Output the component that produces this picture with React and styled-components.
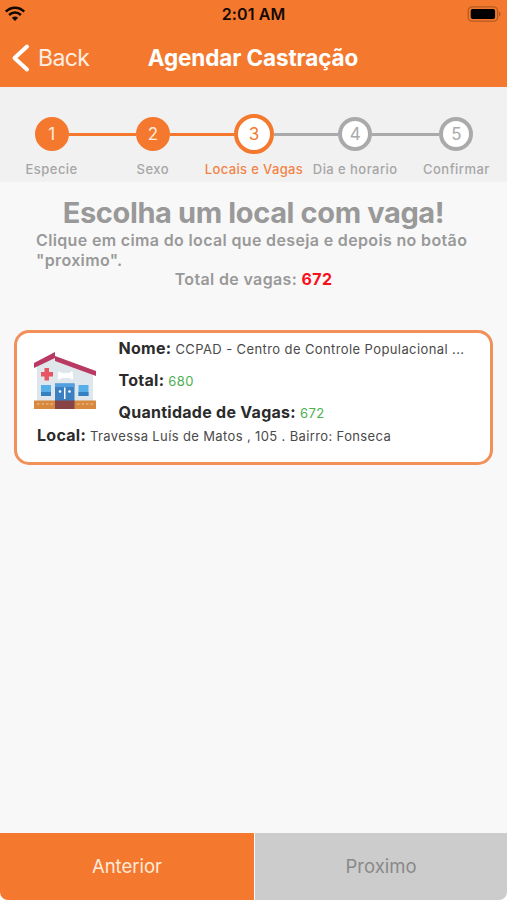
import React from 'react';
import styled, { createGlobalStyle } from 'styled-components';

const ORANGE = '#f4792f';

const GlobalStyle = createGlobalStyle`
  * {
    box-sizing: border-box;
  }
  body {
    margin: 0;
    background: #fff;
    font-family: Inter, 'Liberation Sans', sans-serif;
  }
`
const Screen = styled.div`
  display: flex;
  flex-direction: column;
  width: 507px;
  height: 900px;
  overflow: hidden;
  background: #f8f8f8;
  border-radius: 0 0 8px 8px;
`
const StatusBar = styled.div`
  display: grid;
  grid-template-columns: 1fr auto 1fr;
  align-items: center;
  height: 29px;
  padding: 0 6px 0 4px;
  background: ${ORANGE};
  svg {
    display: block;
    margin-top: -2px;
  }
  svg:last-child {
    justify-self: end;
  }
`
const Clock = styled.span`
  padding-left: 2px;
  font-size: 16px;
  font-weight: 600;
  line-height: 29px;
  letter-spacing: 0.1px;
  color: #150a03;
`
const NavBar = styled.div`
  display: grid;
  grid-template-columns: 1fr auto 1fr;
  align-items: center;
  height: 58px;
  padding: 0 11px 0 10px;
  background: ${ORANGE};
  color: #fff;
`
const BackButton = styled.div`
  display: flex;
  align-items: center;
  gap: 8px;
  font-size: 23px;
  line-height: 30px;
  color: #ffeee2;
  letter-spacing: -0.6px;
`
const NavTitle = styled.div`
  font-size: 22.5px;
  font-weight: 700;
  line-height: 30px;
  letter-spacing: -0.12px;
`
const Stepper = styled.div`
  display: flex;
  height: 95px;
  padding: 26px 0 0 1px;
  background: #f1f1f1;
`
const StepItem = styled.div`
  display: flex;
  flex: 1 1 0;
  min-width: 0;
  flex-direction: column;
  align-items: center;
`
const StepTrack = styled.div`
  display: flex;
  align-items: center;
  width: 100%;
  height: 42px;
`
const StepLine = styled.div`
  flex: 1;
  height: 3px;
  background: ${({ color }) => color || 'transparent'};
`
const StepCircle = styled.div`
  display: flex;
  align-items: center;
  justify-content: center;
  width: ${({ $status }) => $status === 'current' ? 40 : 34}px;
  height: ${({ $status }) => $status === 'current' ? 40 : 34}px;
  border: 4px solid ${({ $status }) => $status === 'pending' ? '#aaa' : ORANGE};
  border-radius: 50%;
  background: ${({ $status }) => $status === 'done' ? ORANGE : '#fff'};
  color: ${({ $status }) => ({ done: '#ffeadb', current: ORANGE, pending: '#aaa' })[$status]};
  font-size: 17px;
  line-height: 20px;
  padding-bottom: 1px;
`
const StepLabel = styled.div`
  margin-top: 5px;
  font-size: 13px;
  font-weight: 500;
  line-height: 18px;
  letter-spacing: ${({ $active }) => $active ? 0.35 : 0.45}px;
  white-space: nowrap;
  color: ${({ $active }) => $active ? '#f28447' : '#a6a6a6'};
`
const Intro = styled.div`
  display: flex;
  flex-direction: column;
  align-items: center;
  padding: 13px 36px 0;
  color: #999;
`
const Heading = styled.h1`
  margin: 0;
  font-size: 29px;
  font-weight: 700;
  line-height: 36px;
  letter-spacing: -0.38px;
  white-space: nowrap;
`
const Instruction = styled.div`
  width: 100%;
  font-size: 16px;
  font-weight: 600;
  line-height: 19.5px;
  letter-spacing: 0.35px;
`
const Vacancies = styled(Instruction)`
  text-align: center;
  span {
    font-weight: 700;
    color: #f8101c;
  }
`
const Card = styled.div`
  margin: 40px 14px 0;
  height: 135px;
  padding: 5px 16px 0;
  border: 3px solid #f29059;
  border-radius: 15px;
  background: #fff;
`
const CardTop = styled.div`
  display: flex;
  svg {
    flex: none;
    margin: 14px 0 0 0.5px;
  }
`
const CardFields = styled.div`
  display: flex;
  flex-direction: column;
  gap: 11px;
  margin-left: 23px;
  min-width: 0;
`
const Field = styled.div`
  line-height: 20px;
  font-size: 13px;
  letter-spacing: 0.4px;
  white-space: nowrap;
  color: ${({ $green }) => $green ? '#4caf50' : '#4a4a4a'};
  b {
    font-size: 16px;
    font-weight: 700;
    letter-spacing: 0.27px;
    color: #2b2b2b;
  }
`
const Address = styled(Field)`
  margin: 2px 0 0 4px;
  letter-spacing: 0.37px;
`
const Footer = styled.div`
  display: grid;
  grid-template-columns: 254px 1fr;
  gap: 1px;
  height: 67px;
  margin-top: auto;
  background: #fff;
`
const FooterButton = styled.div`
  display: flex;
  align-items: center;
  justify-content: center;
  padding-bottom: 2px;
  font-size: 18.5px;
  background: ${({ disabled }) => disabled ? '#ccc' : ORANGE};
  color: ${({ disabled }) => disabled ? '#898989' : '#ffeadb'};
`

const steps = [
  { label: 'Especie', status: 'done' },
  { label: 'Sexo', status: 'done' },
  { label: 'Locais e Vagas', status: 'current' },
  { label: 'Dia e horario', status: 'pending' },
  { label: 'Confirmar', status: 'pending' },
]

const WifiIcon = () => (
  <svg width="22" height="16" viewBox="0 0 22 16" fill="none" stroke="#120802" strokeWidth="2.5">
    <path d="M1.8 5.6C7 .4 15 .4 20.2 5.6" />
    <path d="M5.1 9C8.5 5.7 13.5 5.7 16.9 9" />
    <path d="M7.8 11.8C9.6 10 12.4 10 14.2 11.8L11 15Z" fill="#120802" stroke="none" />
  </svg>
)

const BatteryIcon = () => (
  <svg width="34" height="16" viewBox="0 0 34 16">
    <rect x="1.2" y=".8" width="29.4" height="14.4" rx="4" fill="none" stroke="#b45a22" strokeWidth="1.3" />
    <rect x="3.7" y="3" width="24.4" height="10" rx="2" fill="#000" />
    <path d="M32 5.5Q33.6 6 33.6 8T32 10.5Z" fill="#b45a22" />
  </svg>
)

const BackIcon = () => (
  <svg width="20" height="30" viewBox="0 0 20 30" fill="none" stroke="#fff" strokeWidth="4" strokeLinecap="round" strokeLinejoin="round">
    <path d="M17 3.500L4.500 15L17 26.500" />
  </svg>
)

const ClinicIcon = () => (
  <svg width="62" height="58" viewBox="0 0 62 58">
    <path d="M3 13L21 4L59 20V50H3Z" fill="#dfe7ec" />
    <path d="M0 11L21 0V6L0 16Z" fill="#b83a62" />
    <path d="M21 4L62 19V24L21 9Z" fill="#b83a62" />
    <path d="M10.5 16H15V20H19V24.5H15V28.5H10.5V24.5H7V20H10.5Z" fill="#e85562" />
    <path d="M24 20Q26 18.5 27.5 21H35.5Q37 18 39 20V27Q37 28 35.5 26H27.5Q26 28.500 24 27Z" fill="#fff" />
    <path d="M7 33H17V44H7ZM44.500 33H54.500V44H44.500Z" fill="#57afea" />
    <path d="M7 40H17V44H7ZM44.500 40H54.500V44H44.500Z" fill="#367fc0" />
    <path d="M0 48.500H62V57H0Z" fill="#d7893f" />
    <path d="M3 52H20M43 52H60" stroke="#e8b178" strokeWidth="1.500" strokeDasharray="2.500 2" />
    <path d="M21 31.500H40.500V50H21Z" fill="#3a80c2" />
    <path d="M21 31.500H40.500V35H21Z" fill="#52a0df" />
    <path d="M30 35.500H31.500V47H30Z" fill="#fff" />
    <circle cx="26" cy="39.500" r="1.300" fill="#fff" />
    <circle cx="35.500" cy="39.500" r="1.300" fill="#fff" />
    <path d="M21 48.500H40.500V57H21Z" fill="#864446" />
  </svg>
)

class App extends React.Component {
  lineColor = (index) => {
    if (index <= 0 || index >= steps.length) return null;
    return steps[index].status === 'pending' ? '#aaa' : ORANGE;
  }

  renderStep = ({ label, status }, i) => (
    <StepItem key={label}>
      <StepTrack>
        <StepLine color={this.lineColor(i)} />
        <StepCircle $status={status}>{i + 1}</StepCircle>
        <StepLine color={this.lineColor(i + 1)} />
      </StepTrack>
      <StepLabel $active={status === 'current'}>{label}</StepLabel>
    </StepItem>
  )

  render() {
    return (
      <Screen>
        <GlobalStyle />
        <StatusBar>
          <WifiIcon />
          <Clock>2:01 AM</Clock>
          <BatteryIcon />
        </StatusBar>
        <NavBar>
          <BackButton><BackIcon />Back</BackButton>
          <NavTitle>Agendar Castração</NavTitle>
        </NavBar>
        <Stepper>{steps.map(this.renderStep)}</Stepper>
        <Intro>
          <Heading>Escolha um local com vaga!</Heading>
          <Instruction>Clique em cima do local que deseja e depois no botão "proximo".</Instruction>
          <Vacancies>Total de vagas: <span>672</span></Vacancies>
        </Intro>
        <Card>
          <CardTop>
            <ClinicIcon />
            <CardFields>
              <Field><b>Nome:</b> CCPAD - Centro de Controle Populacional ...</Field>
              <Field $green><b>Total:</b> 680</Field>
              <Field $green><b>Quantidade de Vagas:</b> 672</Field>
            </CardFields>
          </CardTop>
          <Address><b>Local:</b> Travessa Luís de Matos , 105 . Bairro: Fonseca</Address>
        </Card>
        <Footer>
          <FooterButton>Anterior</FooterButton>
          <FooterButton disabled>Proximo</FooterButton>
        </Footer>
      </Screen>
    )
  }
}

export default App;
